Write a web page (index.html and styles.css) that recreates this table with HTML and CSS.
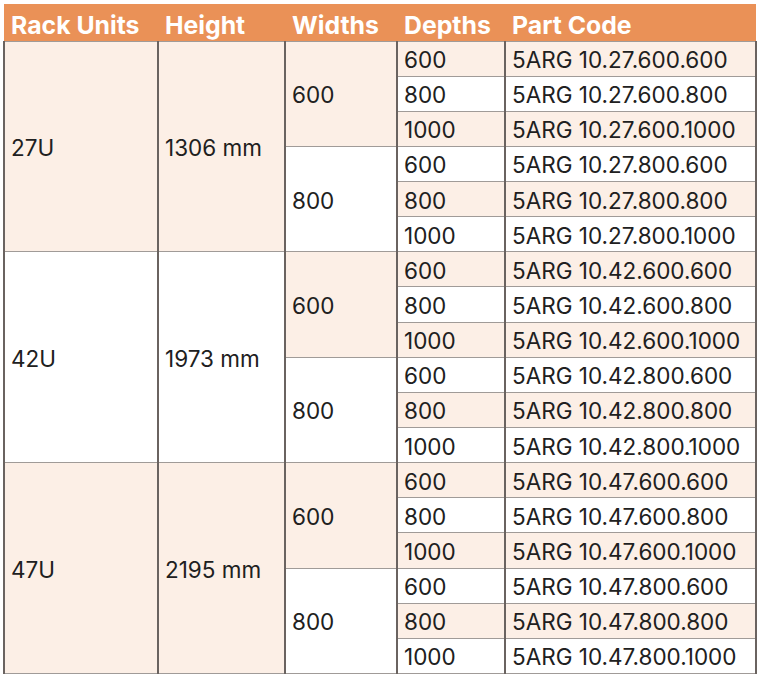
FILE: index.html
```html
<!DOCTYPE html>
<html>
<head>
<meta charset="utf-8">
<link rel="stylesheet" href="styles.css">
</head>
<body>
<table class="spec">
  <colgroup>
    <col class="c1"><col class="c2"><col class="c3"><col class="c4"><col class="c5">
  </colgroup>
  <thead>
    <tr><th>Rack Units</th><th>Height</th><th>Widths</th><th>Depths</th><th>Part Code</th></tr>
  </thead>
  <tbody>
    <tr class="odd"><td rowspan="6" class="tint">27U</td><td rowspan="6" class="tint">1306 mm</td><td rowspan="3" class="tint">600</td><td>600</td><td>5ARG 10.27.600.600</td></tr>
    <tr><td>800</td><td>5ARG 10.27.600.800</td></tr>
    <tr class="odd"><td>1000</td><td>5ARG 10.27.600.1000</td></tr>
    <tr><td rowspan="3">800</td><td>600</td><td>5ARG 10.27.800.600</td></tr>
    <tr class="odd"><td>800</td><td>5ARG 10.27.800.800</td></tr>
    <tr><td>1000</td><td>5ARG 10.27.800.1000</td></tr>

    <tr class="odd"><td rowspan="6">42U</td><td rowspan="6">1973 mm</td><td rowspan="3" class="tint">600</td><td>600</td><td>5ARG 10.42.600.600</td></tr>
    <tr><td>800</td><td>5ARG 10.42.600.800</td></tr>
    <tr class="odd"><td>1000</td><td>5ARG 10.42.600.1000</td></tr>
    <tr><td rowspan="3">800</td><td>600</td><td>5ARG 10.42.800.600</td></tr>
    <tr class="odd"><td>800</td><td>5ARG 10.42.800.800</td></tr>
    <tr><td>1000</td><td>5ARG 10.42.800.1000</td></tr>

    <tr class="odd"><td rowspan="6" class="tint">47U</td><td rowspan="6" class="tint">2195 mm</td><td rowspan="3" class="tint">600</td><td>600</td><td>5ARG 10.47.600.600</td></tr>
    <tr><td>800</td><td>5ARG 10.47.600.800</td></tr>
    <tr class="odd"><td>1000</td><td>5ARG 10.47.600.1000</td></tr>
    <tr><td rowspan="3">800</td><td>600</td><td>5ARG 10.47.800.600</td></tr>
    <tr class="odd"><td>800</td><td>5ARG 10.47.800.800</td></tr>
    <tr><td>1000</td><td>5ARG 10.47.800.1000</td></tr>
  </tbody>
</table>
</body>
</html>
```
FILE: styles.css
```css
html, body {
  margin: 0;
  padding: 0;
  background: #ffffff;
}
body {
  padding: 4px 0 0 3px;
  font-family: Inter, "Liberation Sans", sans-serif;
  color: #202020;
}
.spec {
  border-collapse: collapse;
  table-layout: fixed;
  width: 752px;
}
.c1 { width: 154px; }
.c2 { width: 127px; }
.c3 { width: 112px; }
.c4 { width: 108px; }
.c5 { width: 251px; }
.spec th {
  background: #ea9157;
  color: #ffffff;
  font-weight: 700;
  font-size: 24.8px;
  line-height: 30px;
  text-align: left;
  height: 37px;
  padding: 5px 0 0 7px;
  border: none;
  box-sizing: border-box;
}
.spec td {
  font-size: 22.5px;
  font-weight: 400;
  height: 35.15px;
  padding: 2px 0 0 6px;
  border-left: 2px solid #6a6360;
  border-right: 2px solid #6a6360;
  border-top: 1px solid #a09b98;
  border-bottom: 1px solid #a09b98;
  vertical-align: middle;
  background: #ffffff;
  box-sizing: border-box;
}
.spec tr.odd td { background: #fcefe6; }
.spec tr.odd td[rowspan] { background: #ffffff; }
.spec tr td.tint, .spec tr.odd td.tint { background: #fcefe6; }
```
